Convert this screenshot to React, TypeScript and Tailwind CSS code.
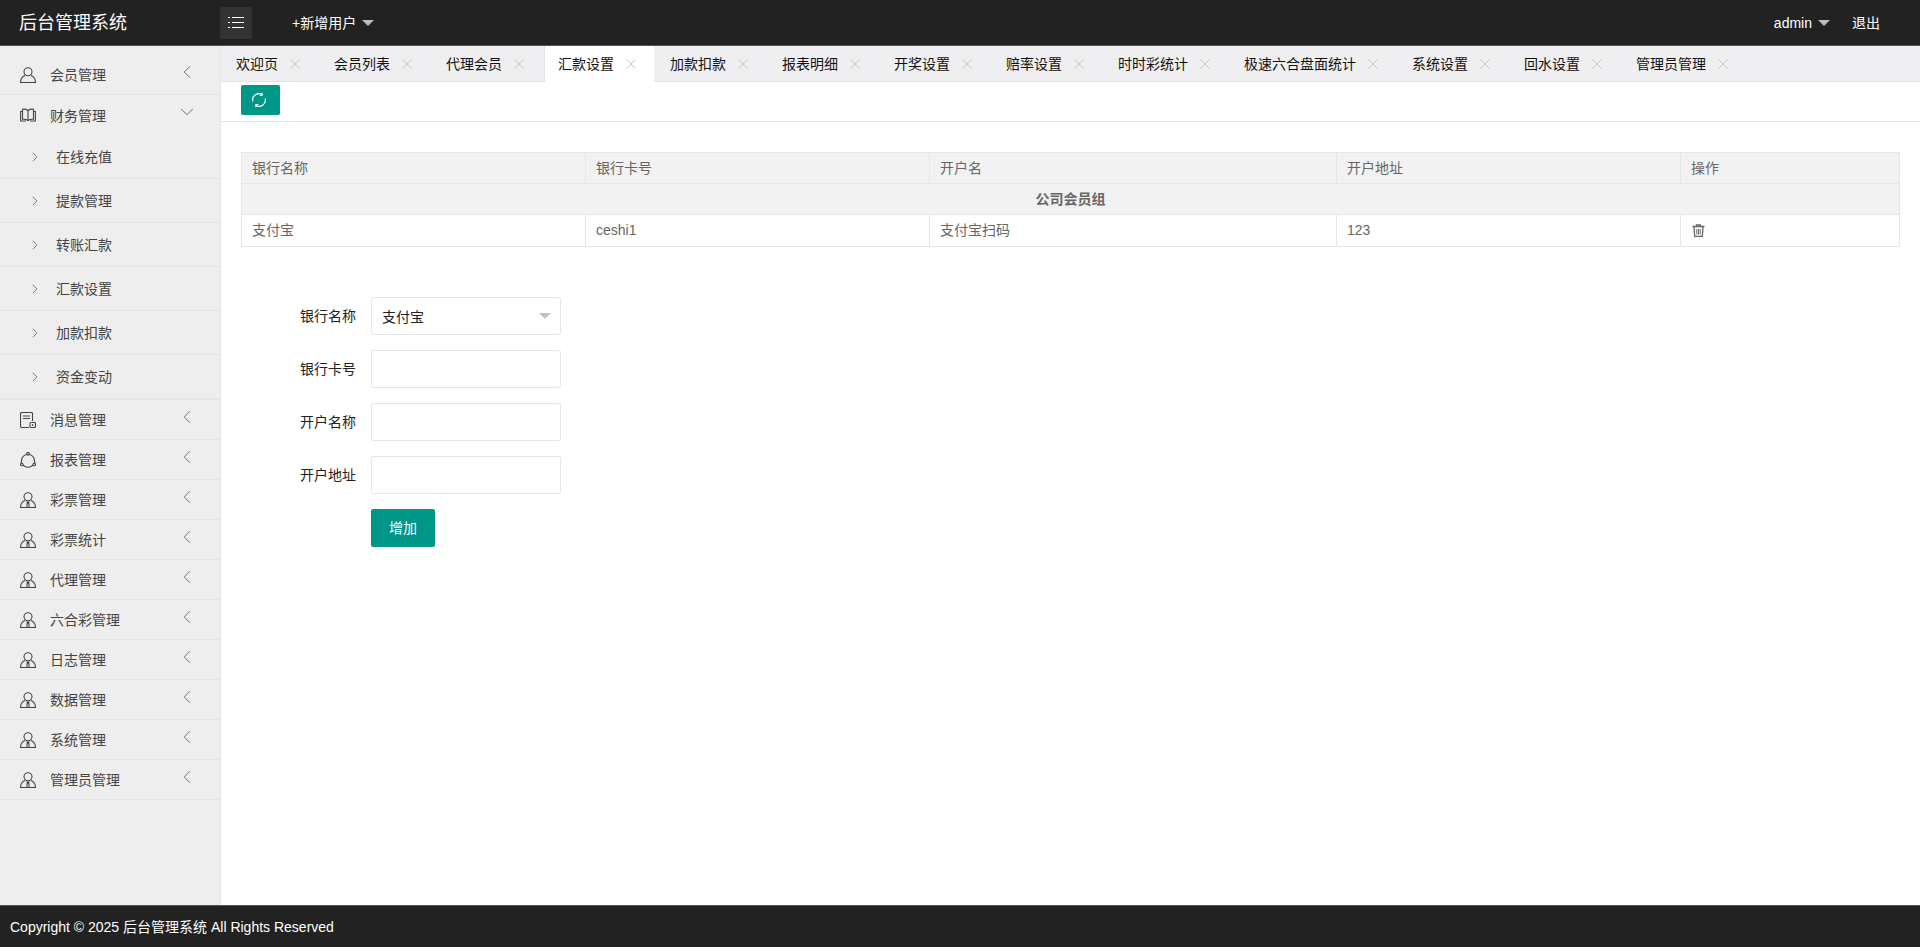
import { ChevronDown, ChevronLeft, ChevronRight } from "lucide-react";

const FONT = "font-['Liberation_Sans','Noto_Sans_CJK_SC',sans-serif]";

const tabs = [
  "欢迎页",
  "会员列表",
  "代理会员",
  "汇款设置",
  "加款扣款",
  "报表明细",
  "开奖设置",
  "赔率设置",
  "时时彩统计",
  "极速六合盘面统计",
  "系统设置",
  "回水设置",
  "管理员管理",
];

const subItems = ["在线充值", "提款管理", "转账汇款", "汇款设置", "加款扣款", "资金变动"];

const lowerMenus = ["彩票管理", "彩票统计", "代理管理", "六合彩管理", "日志管理", "数据管理", "系统管理", "管理员管理"];

function UserIcon() {
  return (
    <svg width="16" height="16" viewBox="0 0 16 16" fill="none" stroke="#444" strokeWidth="1.1">
      <circle cx="8" cy="4.8" r="4" />
      <path d="M5 8.6C2.4 9.6.6 11.8.5 15.5h15c-.1-3.7-1.9-5.9-4.5-6.9" />
    </svg>
  );
}

function StaffIcon() {
  return (
    <svg width="16" height="16" viewBox="0 0 16 16" fill="none" stroke="#444" strokeWidth="1.1">
      <circle cx="8" cy="4.8" r="4" />
      <path d="M5 8.6C2.4 9.6.6 11.8.5 15.5h15c-.1-3.7-1.9-5.9-4.5-6.9" />
      <path d="M6.6 9.5 8 11l1.4-1.5M7.2 11 6.8 15.5M8.800 11l.4 4.500" />
    </svg>
  );
}

function BookIcon() {
  return (
    <svg width="16" height="16" viewBox="0 0 16 16" fill="none" stroke="#444" strokeWidth="1.1">
      <path d="M8 3.500C6.600 2.300 4.600 2 2.500 2.200v10.100c2.100-.2 4.100.1 5.500 1.200 1.400-1.100 3.400-1.400 5.500-1.200V2.200C11.400 2 9.400 2.300 8 3.500Z" />
      <path d="M8 3.500v10M2.500 4.500H.6v9.500H6M13.500 4.500h1.900V14H10" />
    </svg>
  );
}

function NoticeIcon() {
  return (
    <svg width="16" height="16" viewBox="0 0 16 16" fill="none" stroke="#444" strokeWidth="1.1">
      <path d="M9 15.500H2A1.500 1.500 0 0 1 .5 14V1.500a1 1 0 0 1 1-1h10a1 1 0 0 1 1 1V9" />
      <path d="M3 4h7M3 6.500h7" />
      <rect x="10" y="10.500" width="5.500" height="5" rx="1" />
      <path d="M12.700 12v2" />
    </svg>
  );
}

function NodesIcon() {
  return (
    <svg width="16" height="16" viewBox="0 0 16 16" fill="none" stroke="#444" strokeWidth="1.1">
      <circle cx="8" cy="1.800" r="1.300" />
      <circle cx="1.800" cy="12.500" r="1.300" />
      <circle cx="14.200" cy="12.500" r="1.300" />
      <path d="M6.800 2.200C3.300 3.200 1 6.500 1.300 11.200M9.200 2.200c3.500 1 5.800 4.300 5.500 9M3 13.300c3 2.400 7 2.400 10 0" />
    </svg>
  );
}

function Caret({ color }: { color: string }) {
  return <span className={`inline-block h-0 w-0 border-x-[6px] border-t-[6px] border-x-transparent ${color}`} />;
}

function MenuItem({ icon, label, open }: { icon: React.ReactNode; label: string; open?: boolean }) {
  return (
    <div className={`flex h-10 items-center pl-5 text-[#444] ${open ? "" : "border-b border-[#e4e4e4]"}`}>
      <span className="mr-[14px] flex w-4 shrink-0">{icon}</span>
      <span className="pt-px">{label}</span>
      {open ? (
        <ChevronDown size={22} strokeWidth={0.9} className="mb-[6px] ml-auto mr-[22px] text-[#555]" />
      ) : (
        <ChevronLeft size={22} strokeWidth={0.9} className="mb-[5px] ml-auto mr-[22px] text-[#555]" />
      )}
    </div>
  );
}

function Sidebar() {
  return (
    <aside className="w-[221px] shrink-0 border-r border-[#e4e4e4] bg-[#eeeeee] pt-[9px]">
      <MenuItem icon={<UserIcon />} label="会员管理" />
      <MenuItem icon={<BookIcon />} label="财务管理" open />
      <div className="border-b border-[#e4e4e4]">
        {subItems.map((s) => (
          <div key={s} className="flex h-11 items-center border-b border-[#e4e4e4] pl-[27px] text-[#444]">
            <ChevronRight size={16} strokeWidth={1.1} className="mr-[13px] text-[#555]" />
            <span>{s}</span>
          </div>
        ))}
      </div>
      <MenuItem icon={<NoticeIcon />} label="消息管理" />
      <MenuItem icon={<NodesIcon />} label="报表管理" />
      {lowerMenus.map((m) => (
        <MenuItem key={m} icon={<StaffIcon />} label={m} />
      ))}
    </aside>
  );
}

function TabBar() {
  return (
    <div className="flex h-9 shrink-0 border-b border-[#e2e2e2] bg-[#efeff1] pl-px">
      {tabs.map((t) => {
        const active = t === "汇款设置";
        return (
          <div
            key={t}
            className={`flex h-9 items-center text-[#111] ${active ? "mr-[2px] border-l border-[#e2e2e2] bg-white pl-[13px] pr-[18px]" : "pl-[14px] pr-5"}`}
          >
            <span>{t}</span>
            <svg width="10" height="10" viewBox="0 0 10 10" stroke="#c4c4c4" strokeWidth="1" className="ml-3">
              <path d="M.5.5l9 9M9.500.5l-9 9" />
            </svg>
          </div>
        );
      })}
    </div>
  );
}

function BankTable() {
  const cell = "border border-[#e6e6e6] px-[10px] text-left font-normal";
  const dataCell = `${cell} pb-px`;
  return (
    <table className="w-full table-fixed border-collapse text-[#666]">
      <colgroup>
        <col className="w-[344px]" />
        <col className="w-[344px]" />
        <col className="w-[407px]" />
        <col className="w-[344px]" />
        <col />
      </colgroup>
      <thead className="bg-[#f2f2f2]">
        <tr className="h-[31px]">
          <th className={cell}>银行名称</th>
          <th className={cell}>银行卡号</th>
          <th className={cell}>开户名</th>
          <th className={cell}>开户地址</th>
          <th className={cell}>操作</th>
        </tr>
      </thead>
      <tbody>
        <tr className="h-[31px] bg-[#f2f2f2]">
          <td colSpan={5} className="border border-[#e6e6e6] text-center font-bold">
            公司会员组
          </td>
        </tr>
        <tr className="h-8">
          <td className={dataCell}>支付宝</td>
          <td className={dataCell}>ceshi1</td>
          <td className={dataCell}>支付宝扫码</td>
          <td className={dataCell}>123</td>
          <td className={dataCell}>
            <svg width="13" height="13" viewBox="0 0 13 13" fill="none" stroke="#666" strokeWidth="1.300" className="ml-px">
              <path d="M.5 2.500h12M4.500 2V.8h4V2M2 3l.7 9.300h7.600L11 3" />
              <path d="M4.800 5v5.500M6.500 5v5.500M8.200 5v5.500" strokeWidth="1" />
            </svg>
          </td>
        </tr>
      </tbody>
    </table>
  );
}

function FormRow({ label, children }: { label: string; children: React.ReactNode }) {
  return (
    <div className="mb-[15px] flex items-center">
      <label className="w-[115px] shrink-0 pl-[59px] text-[#222]">{label}</label>
      <div className="ml-[15px]">{children}</div>
    </div>
  );
}

const inputClass = "block h-[38px] w-[190px] rounded-[2px] border border-[#e6e6e6] bg-white pl-[10px] text-[#222] outline-none";

export default function App() {
  return (
    <div className={`flex h-screen flex-col overflow-hidden bg-white text-sm ${FONT}`}>
      <header className="flex h-[46px] shrink-0 items-center border-b border-[#555] bg-[#222] text-white">
        <div className="w-[220px] pl-[19px] text-[18px] leading-none">后台管理系统</div>
        <button className="flex h-[32px] w-[32px] items-center justify-center rounded-[2px] bg-[#333]">
          <svg width="16" height="11" viewBox="0 0 16 11" fill="#fff">
            <rect x="0" y="0" width="2" height="1" />
            <rect x="4" y="0" width="12" height="1" />
            <rect x="0" y="5" width="2" height="1" />
            <rect x="4" y="5" width="12" height="1" />
            <rect x="0" y="10" width="2" height="1" />
            <rect x="4" y="10" width="12" height="1" />
          </svg>
        </button>
        <div className="ml-10 flex items-center gap-[6px]">
          <span>+新增用户</span>
          <Caret color="border-t-[#bbb]" />
        </div>
        <div className="ml-auto flex items-center pr-10">
          <span>admin</span>
          <span className="ml-[6px] mr-[22px] flex">
            <Caret color="border-t-[#bbb]" />
          </span>
          <span>退出</span>
        </div>
      </header>

      <div className="flex min-h-0 flex-1">
        <Sidebar />
        <main className="flex min-w-0 flex-1 flex-col">
          <TabBar />
          <div className="flex h-10 shrink-0 border-b border-[#e6e6e6] pl-5 pt-[3px]">
            <button className="flex h-[30px] w-[39px] items-center justify-center rounded-[2px] bg-[#009688]">
              <svg width="16" height="16" viewBox="0 0 16 16" fill="none" stroke="#fff" strokeWidth="1.200" className="mr-1">
                <path d="M1.800 9.500A6.300 6.300 0 0 1 11.500 2.800" />
                <path d="M14.200 6.500A6.300 6.300 0 0 1 4.500 13.200" />
                <path d="M11 .8v2.500H8.700M5 15.200v-2.500h2.300" />
              </svg>
            </button>
          </div>

          <div className="px-5 pt-[30px]">
            <BankTable />
            <form className="mt-[50px]">
              <FormRow label="银行名称">
                <div className="relative h-[38px] w-[190px]">
                  <input readOnly value="支付宝" className={inputClass} />
                  <span className="absolute right-[10px] top-[16px] flex">
                    <Caret color="border-t-[#c2c2c2]" />
                  </span>
                </div>
              </FormRow>
              <FormRow label="银行卡号">
                <input className={inputClass} />
              </FormRow>
              <FormRow label="开户名称">
                <input className={inputClass} />
              </FormRow>
              <FormRow label="开户地址">
                <input className={inputClass} />
              </FormRow>
              <div className="pl-[130px]">
                <button type="button" className="h-[38px] w-16 rounded-[2px] bg-[#009688] text-white">
                  增加
                </button>
              </div>
            </form>
          </div>
        </main>
      </div>

      <footer className="flex h-[42px] shrink-0 items-center border-t border-[#555] bg-[#222] pl-[10px] text-white">
        Copyright © 2025 后台管理系统 All Rights Reserved
      </footer>
    </div>
  );
}
